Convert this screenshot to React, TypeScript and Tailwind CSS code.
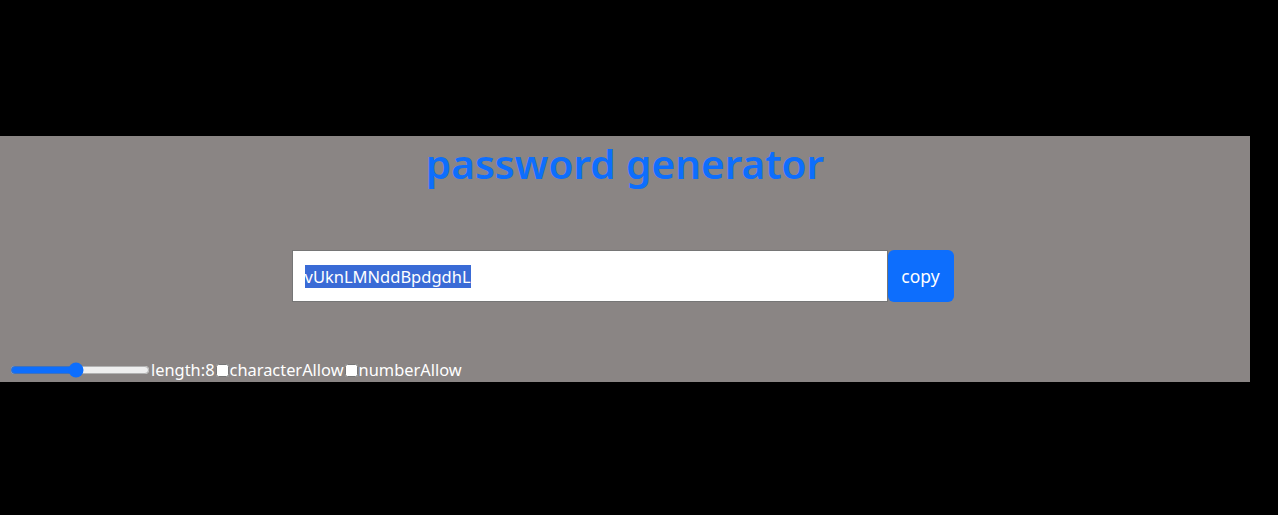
import React, { useEffect, useRef, useState } from 'react';

const App: React.FC = () => {
  const [length, setLength] = useState(8);
  const [password] = useState('vUknLMNddBpdgdhL');
  const inputRef = useRef<HTMLInputElement>(null);

  useEffect(() => {
    inputRef.current?.select();
  }, []);

  return (
    <div className="min-h-screen bg-black pt-[136px]" style={{ fontFamily: '"Noto Sans", "Open Sans", sans-serif' }}>
      <div className="w-[1250px] h-[246px] bg-[#8a8584] flex flex-col">
        <h1 className="text-center text-[40.5px] leading-[56px] font-semibold text-[#0d6efd]">
          password generator
        </h1>
        <div className="flex justify-center mt-[58px] pr-[5px]">
          <input
            ref={inputRef}
            type="text"
            readOnly
            value={password}
            className="w-[596px] h-[52px] bg-white border border-[#767676] pl-[12px] text-[16.5px] text-black outline-none selection:bg-[#3a6bd6] selection:text-white"
          />
          <button className="h-[52px] w-[66px] bg-[#0d6efd] text-white text-[17.5px] rounded-md">copy</button>
        </div>
        <div className="flex items-center mt-[56px] text-white text-[16.4px] leading-[24px]">
          <input
            type="range"
            min={1}
            max={16}
            value={length}
            onChange={(e) => setLength(Number(e.target.value))}
            className="w-[140px] ml-[10px] mr-[1px] accent-[#0d6efd]"
          />
          <label>length:{length}</label>
          <input type="checkbox" className="w-[13px] h-[13px] mx-[1px]" />
          <label>characterAllow</label>
          <input type="checkbox" className="w-[13px] h-[13px] mx-[1px]" />
          <label>numberAllow</label>
        </div>
      </div>
    </div>
  );
};

export default App;
